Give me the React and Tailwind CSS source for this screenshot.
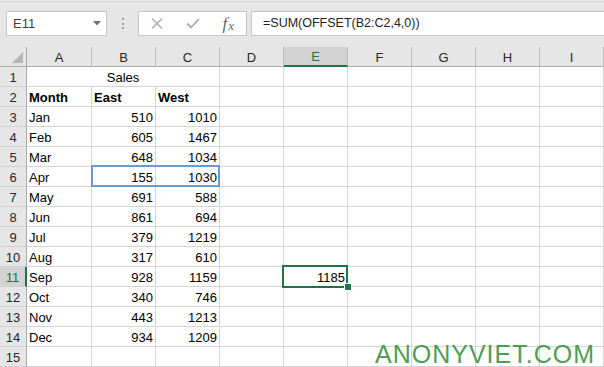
import React from 'react';

const COLS = ['A', 'B', 'C', 'D', 'E', 'F', 'G', 'H', 'I'];

const sales = [
  ['Jan', 510, 1010],
  ['Feb', 605, 1467],
  ['Mar', 648, 1034],
  ['Apr', 155, 1030],
  ['May', 691, 588],
  ['Jun', 861, 694],
  ['Jul', 379, 1219],
  ['Aug', 317, 610],
  ['Sep', 928, 1159],
  ['Oct', 340, 746],
  ['Nov', 443, 1213],
  ['Dec', 934, 1209],
];

const cell = 'h-5 border-r border-b border-[#d4d4d4] bg-white flex items-end leading-4 whitespace-nowrap overflow-hidden';
const left = cell + ' pl-[2px]';
const right = cell + ' justify-end pr-[2px]';

function FormulaBar() {
  return (
    <div className="bg-[#e6e6e6]">
      <div className="h-[2px] bg-[#ececec] border-b border-[#d2d2d2]" />
      <div className="h-[45px] flex items-start pt-[9px] text-[13px]">
        <div className="ml-[6px] w-[101px] h-[25px] bg-white border border-[#c6c6c6] flex items-center justify-between pl-[6px] pr-[5px] text-[#404040]">
          <span>E11</span>
          <svg width="8" height="5" viewBox="0 0 8 5">
            <polygon points="0,0 8,0 4,4.5" fill="#707070" />
          </svg>
        </div>
        <div className="w-[31px] h-[25px] flex flex-col items-center justify-center gap-[2.5px] pl-[1px]">
          <span className="w-[2px] h-[2px] bg-[#a0a0a0]" />
          <span className="w-[2px] h-[2px] bg-[#a0a0a0]" />
          <span className="w-[2px] h-[2px] bg-[#a0a0a0]" />
        </div>
        <div className="w-[109px] h-[25px] bg-white border border-[#c6c6c6] flex">
          <div className="w-[36px] flex items-center justify-center">
            <svg width="12" height="11" viewBox="0 0 12 11">
              <path d="M1 0.5 L11 10.5 M11 0.5 L1 10.5" stroke="#ababab" strokeWidth="1.4" />
            </svg>
          </div>
          <div className="w-[36px] flex items-center justify-center">
            <svg width="14" height="11" viewBox="0 0 14 11">
              <path d="M1 5.5 L5 9.5 L13 1" stroke="#ababab" strokeWidth="1.8" fill="none" />
            </svg>
          </div>
          <div className="w-[36px] flex items-center justify-center text-[#666] italic text-[17px] leading-none" style={{ fontFamily: '"Liberation Serif", serif' }}>
            <span>f</span><span className="text-[13px] ml-[1px] mt-[4px]">x</span>
          </div>
        </div>
        <div className="ml-[4px] flex-1 h-[25px] bg-white border border-r-0 border-[#c6c6c6] flex items-center pl-[11px] text-[12.5px] text-[#222]">
          =SUM(OFFSET(B2:C2,4,0))
        </div>
      </div>
    </div>
  );
}

export default function App() {
  return (
    <div className="relative w-[604px] h-[367px] overflow-hidden bg-white text-[13px] text-black" style={{ fontFamily: '"Liberation Sans", Arial, sans-serif' }}>
      <FormulaBar />
      <div className="grid grid-cols-[27px_65px_repeat(8,64px)]">
        <div className="h-5 bg-[#e6e6e6] border-r border-b border-[#ababab] flex items-end justify-end pr-[3px] pb-[3px]">
          <svg width="11" height="11" viewBox="0 0 11 11">
            <polygon points="11,0 11,11 0,11" fill="#b4b4b4" />
          </svg>
        </div>
        {COLS.map((c) => (
          <div
            key={c}
            className={
              c === 'E'
                ? 'h-5 bg-[#d2d2d2] border-r border-[#bdbdbd] border-b-2 border-b-[#217346] flex items-end justify-center leading-4 text-[#217346]'
                : 'h-5 bg-[#e6e6e6] border-r border-[#bdbdbd] border-b border-b-[#ababab] flex items-end justify-center leading-4 text-[#262626]'
            }
          >
            {c}
          </div>
        ))}

        <div className="h-5 bg-[#e6e6e6] border-r border-r-[#ababab] border-b border-b-[#d0d0d0] flex items-end justify-center leading-4 text-[#262626]">1</div>
        <div className={cell + ' col-span-3 justify-center'}>Sales</div>
        {COLS.slice(3).map((c) => <div key={c} className={cell} />)}

        <div className="h-5 bg-[#e6e6e6] border-r border-r-[#ababab] border-b border-b-[#d0d0d0] flex items-end justify-center leading-4 text-[#262626]">2</div>
        <div className={left + ' font-bold'}>Month</div>
        <div className={left + ' font-bold'}>East</div>
        <div className={left + ' font-bold'}>West</div>
        {COLS.slice(3).map((c) => <div key={c} className={cell} />)}

        {sales.map(([m, e, w], i) => {
          const n = i + 3;
          const sel = n === 11;
          return (
            <React.Fragment key={m}>
              <div
                className={
                  sel
                    ? 'h-5 bg-[#d2d2d2] border-r-2 border-r-[#217346] border-b border-b-[#d0d0d0] flex items-end justify-center leading-4 text-[#217346]'
                    : 'h-5 bg-[#e6e6e6] border-r border-r-[#ababab] border-b border-b-[#d0d0d0] flex items-end justify-center leading-4 text-[#262626]'
                }
              >
                {n}
              </div>
              <div className={left}>{m}</div>
              <div className={right}>{e}</div>
              <div className={right}>{w}</div>
              <div className={cell} />
              <div className={right}>{sel ? 1185 : ''}</div>
              <div className={cell} />
              <div className={cell} />
              <div className={cell} />
              <div className={cell} />
            </React.Fragment>
          );
        })}

        <div className="h-5 bg-[#e6e6e6] border-r border-r-[#ababab] border-b border-b-[#d0d0d0] flex items-end justify-center leading-4 text-[#262626]">15</div>
        {COLS.map((c) => <div key={c} className={cell} />)}
      </div>

      {/* range outline B6:C6 */}
      <div className="absolute left-[91px] top-[165px] w-[129px] h-[22px] border-2 border-[#6a99d8]" />
      {/* active cell E11 */}
      <div className="absolute left-[282px] top-[265px] w-[66px] h-[23px] border-2 border-[#217346]" />
      <div className="absolute left-[345px] top-[284px] w-[6px] h-[6px] bg-[#217346] outline outline-1 outline-white" />

      <div className="absolute left-[375px] top-[342px] text-[25px] leading-[25px] tracking-[1px] text-[#4f9d57]">
        ANONYVIET.COM
      </div>
    </div>
  );
}
